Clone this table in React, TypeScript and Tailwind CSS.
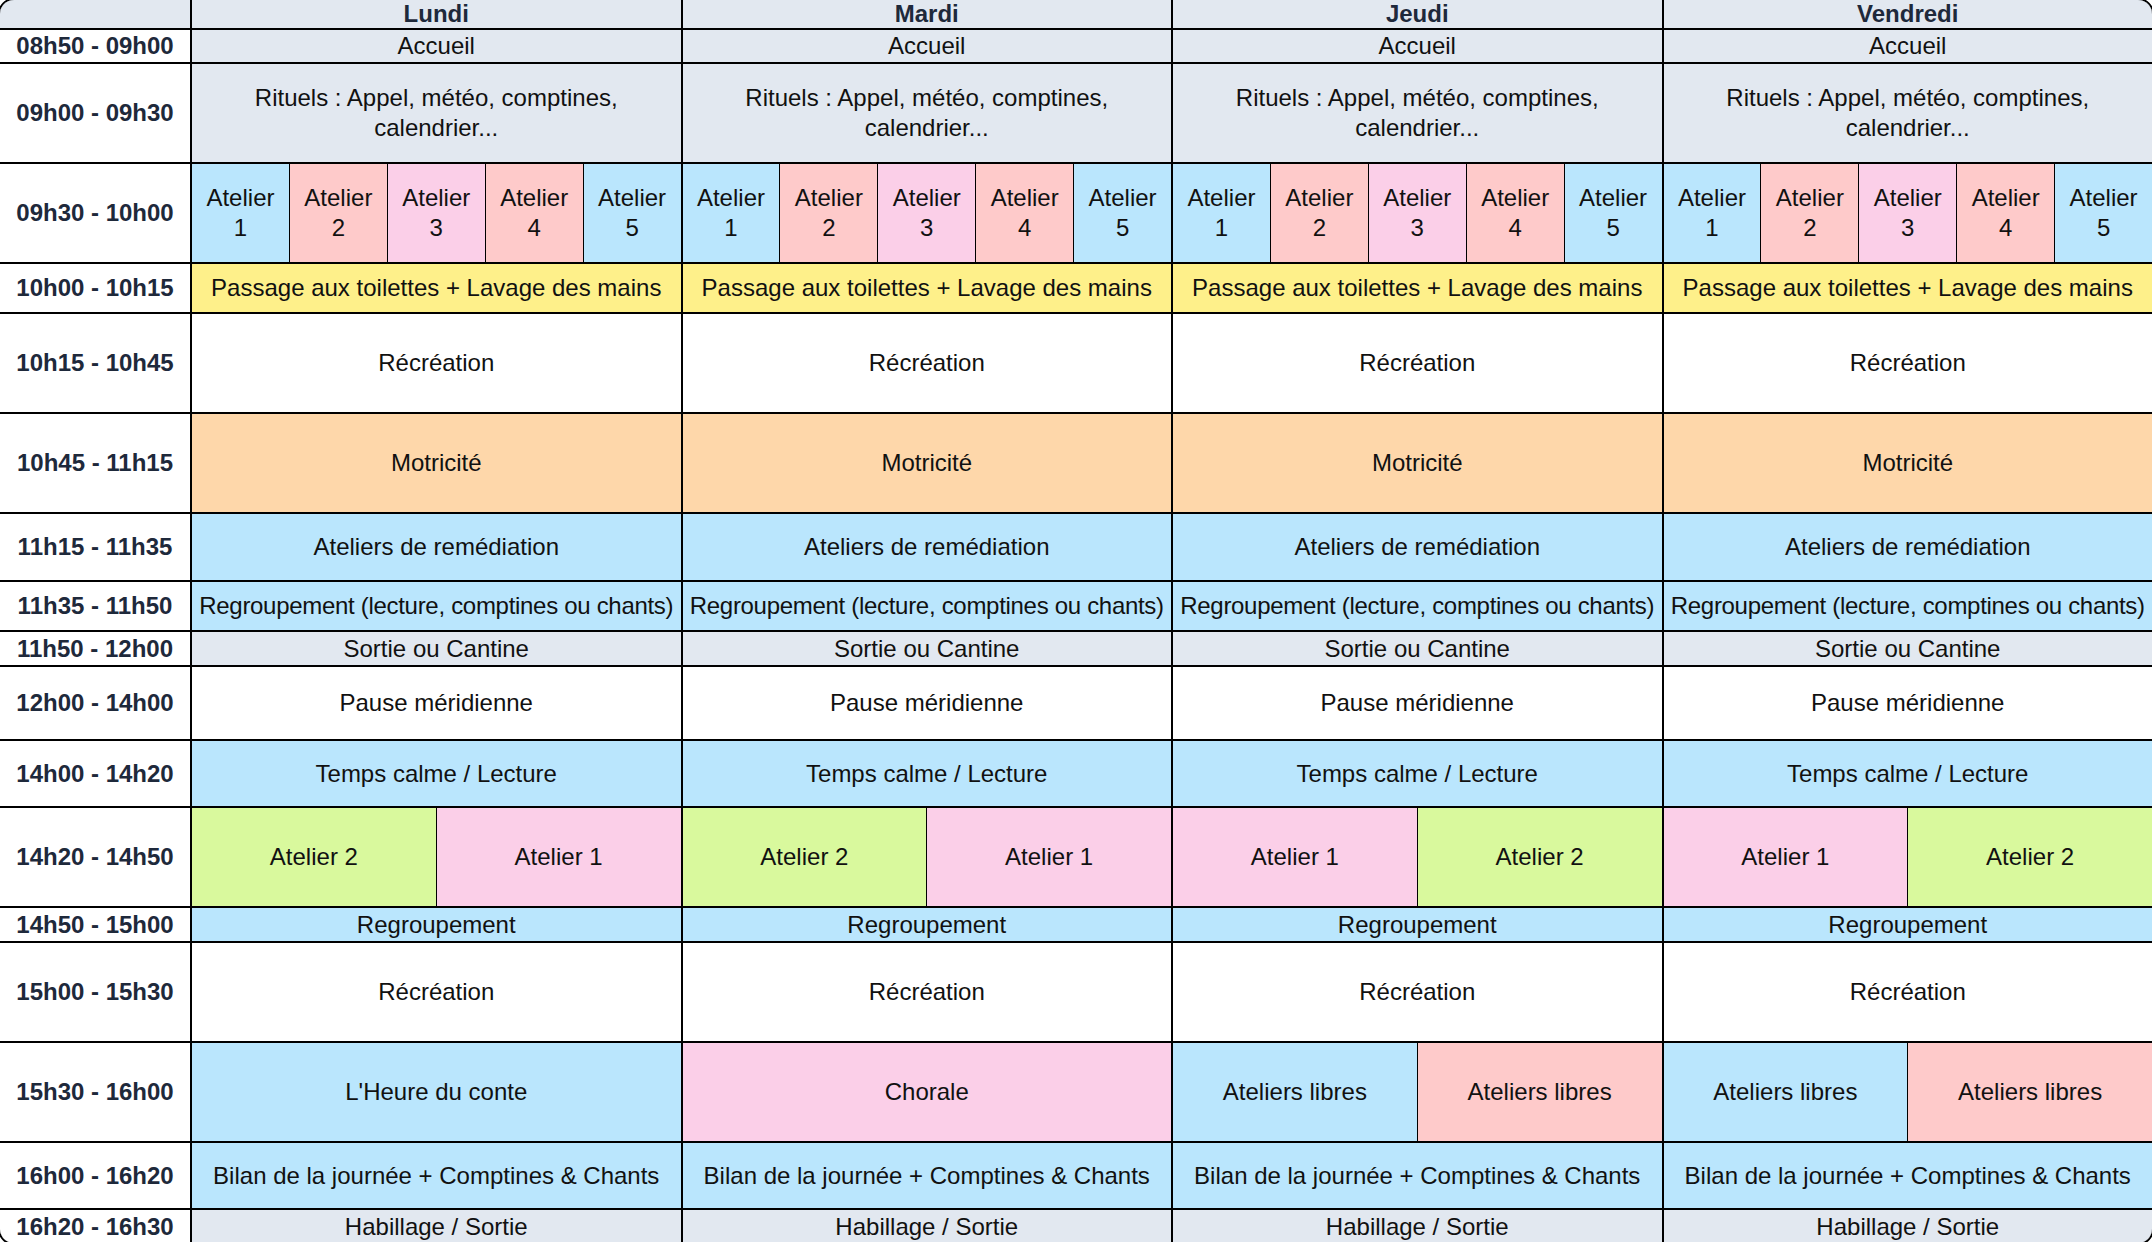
const days = ["Lundi", "Mardi", "Jeudi", "Vendredi"];

type Part = { label: string; bg: string };
type Row = { time: string; h: string; cells: Part[][]; nowrap?: string };

const gray = "bg-[#e2e8f0]";
const blue = "bg-[#bae6fd]";
const red = "bg-[#fecaca]";
const pink = "bg-[#fbcfe8]";
const yellow = "bg-[#fef08a]";
const orange = "bg-[#fed7aa]";
const green = "bg-[#d9f99d]";
const white = "bg-white";

const same = (label: string, bg: string): Part[][] =>
  days.map(() => [{ label, bg }]);

const ateliers: Part[] = [
  { label: "Atelier 1", bg: blue },
  { label: "Atelier 2", bg: red },
  { label: "Atelier 3", bg: pink },
  { label: "Atelier 4", bg: red },
  { label: "Atelier 5", bg: blue },
];

const rows: Row[] = [
  { time: "08h50 - 09h00", h: "h-[32px]", cells: same("Accueil", gray) },
  { time: "09h00 - 09h30", h: "h-[98px]", cells: same("Rituels : Appel, météo, comptines, calendrier...", gray) },
  { time: "09h30 - 10h00", h: "h-[98px]", cells: days.map(() => ateliers) },
  { time: "10h00 - 10h15", h: "h-[48px]", cells: same("Passage aux toilettes + Lavage des mains", yellow), nowrap: "whitespace-nowrap" },
  { time: "10h15 - 10h45", h: "h-[98px]", cells: same("Récréation", white) },
  { time: "10h45 - 11h15", h: "h-[98px]", cells: same("Motricité", orange) },
  { time: "11h15 - 11h35", h: "h-[66px]", cells: same("Ateliers de remédiation", blue) },
  {
    time: "11h35 - 11h50",
    h: "h-[48px]",
    cells: same("Regroupement (lecture, comptines ou chants)", blue),
    nowrap: "whitespace-nowrap tracking-[-0.3px]",
  },
  { time: "11h50 - 12h00", h: "h-[33px]", cells: same("Sortie ou Cantine", gray) },
  { time: "12h00 - 14h00", h: "h-[72px]", cells: same("Pause méridienne", white) },
  { time: "14h00 - 14h20", h: "h-[65px]", cells: same("Temps calme / Lecture", blue) },
  {
    time: "14h20 - 14h50",
    h: "h-[98px]",
    cells: [
      [{ label: "Atelier 2", bg: green }, { label: "Atelier 1", bg: pink }],
      [{ label: "Atelier 2", bg: green }, { label: "Atelier 1", bg: pink }],
      [{ label: "Atelier 1", bg: pink }, { label: "Atelier 2", bg: green }],
      [{ label: "Atelier 1", bg: pink }, { label: "Atelier 2", bg: green }],
    ],
  },
  { time: "14h50 - 15h00", h: "h-[33px]", cells: same("Regroupement", blue) },
  { time: "15h00 - 15h30", h: "h-[98px]", cells: same("Récréation", white) },
  {
    time: "15h30 - 16h00",
    h: "h-[98px]",
    cells: [
      [{ label: "L'Heure du conte", bg: blue }],
      [{ label: "Chorale", bg: pink }],
      [{ label: "Ateliers libres", bg: blue }, { label: "Ateliers libres", bg: red }],
      [{ label: "Ateliers libres", bg: blue }, { label: "Ateliers libres", bg: red }],
    ],
  },
  { time: "16h00 - 16h20", h: "h-[65px]", cells: same("Bilan de la journée + Comptines & Chants", blue), nowrap: "whitespace-nowrap" },
  { time: "16h20 - 16h30", h: "h-[33px]", cells: same("Habillage / Sortie", gray) },
];

export default function App() {
  return (
    <div className="w-[2152px] h-[1242px] overflow-hidden bg-white font-['Liberation_Sans',Arial,sans-serif] text-[24px] leading-[30px]">
      <div className="-m-[2px] rounded-[16px] border-2 border-black overflow-hidden bg-black">
        <div className="grid grid-cols-[190px_repeat(4,minmax(0,1fr))] gap-[2px] bg-black">
          {/* header */}
          <div className={`h-[28px] ${gray}`} />
          {days.map((d) => (
            <div
              key={d}
              className={`h-[28px] ${gray} flex items-center justify-center font-bold text-[#1e293b]`}
            >
              {d}
            </div>
          ))}

          {rows.map((row) => (
            <>
              <div
                key={row.time}
                className={`${row.h} bg-white flex items-center justify-center font-bold text-[#1e293b] whitespace-nowrap`}
              >
                {row.time}
              </div>
              {row.cells.map((parts, i) => (
                <div key={row.time + i} className={`${row.h} flex gap-[1px] bg-black`}>
                  {parts.map((p, j) => (
                    <div
                      key={j}
                      className={`flex-1 min-w-0 ${p.bg} flex items-center justify-center text-center px-2 text-[#111] ${
                        row.nowrap ?? ""
                      }`}
                    >
                      {p.label}
                    </div>
                  ))}
                </div>
              ))}
            </>
          ))}
        </div>
      </div>
    </div>
  );
}
